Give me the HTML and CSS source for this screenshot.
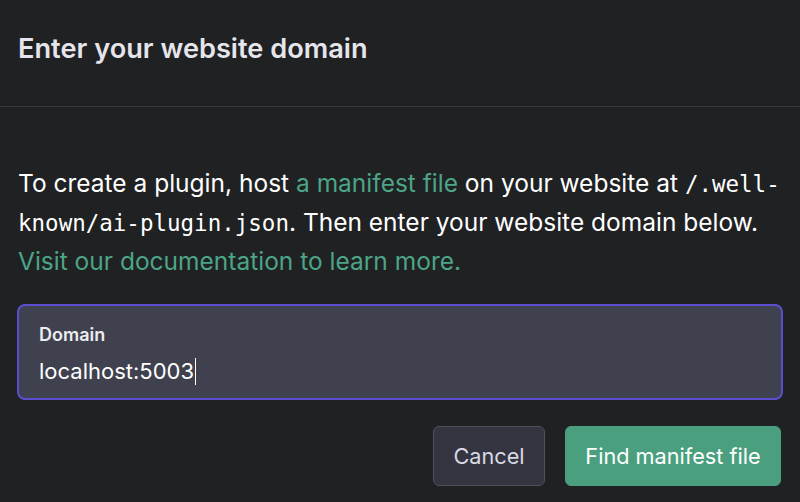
FILE: index.html
```html
<!DOCTYPE html>
<html lang="en">
<head>
    <meta charset="UTF-8">
    <meta name="viewport" content="width=device-width, initial-scale=1.0">
    <title>Enter your website domain</title>
    <link rel="stylesheet" href="styles.css">
</head>
<body>

    <div class="dialog">
        <div class="header">
            <h2>Enter your website domain</h2>
        </div>

        <div class="content">
            <p class="intro">
                To create a plugin, host <a href="#">a manifest file</a> on your website at <code>/.well-known/ai-plugin.json</code>. Then enter your website domain below.
                <a href="#">Visit our documentation to learn more.</a>
            </p>

            <div class="field">
                <label for="domain">Domain</label>
                <div class="value">localhost:5003<span class="caret"></span></div>
            </div>

            <div class="actions">
                <button class="btn btn-cancel">Cancel</button>
                <button class="btn btn-primary">Find manifest file</button>
            </div>
        </div>
    </div>

</body>
</html>
```

FILE: styles.css
```css
body {
    margin: 0;
    background-color: #202123;
    font-family: Inter, "Liberation Sans", sans-serif;
    color: #ececf1;
}
.dialog {
    width: 800px;
}
.header {
    height: 107px;
    padding: 0 18px;
    display: flex;
    align-items: center;
    border-bottom: 1px solid #393a3f;
    box-sizing: border-box;
}
.header h2 {
    margin: 0 0 10px 0;
    font-size: 27.2px;
    font-weight: 600;
    color: #e5e5eb;
}
.content {
    padding: 57px 18px 0 18px;
}
.intro {
    margin: 0;
    font-size: 24.5px;
    line-height: 38px;
    color: #ffffff;
}
.intro a {
    color: #4ca586;
    text-decoration: none;
}
.intro code {
    font-family: "DejaVu Sans Mono", monospace;
    font-size: 22.5px;
}
.field {
    margin: 24px -1px 0 -1px;
    border: 2px solid #5b4fd0;
    border-radius: 8px;
    background-color: #40414f;
    height: 96px;
    box-sizing: border-box;
    padding: 16px 20px 0 20px;
}
.field label {
    display: block;
    font-size: 18px;
    font-weight: 600;
    color: #ececf1;
    line-height: 26px;
}
.value {
    margin-top: 9px;
    font-size: 22px;
    line-height: 28px;
    color: #ffffff;
    display: flex;
    align-items: center;
}
.caret {
    display: inline-block;
    width: 1px;
    height: 27px;
    background-color: #ffffff;
    margin-left: 1px;
}
.actions {
    display: flex;
    justify-content: flex-end;
    gap: 20px;
    margin-top: 26px;
}
.btn {
    height: 60px;
    border-radius: 6px;
    font-family: Inter, "Liberation Sans", sans-serif;
    font-size: 21.7px;
    padding: 0 16px;
    cursor: pointer;
}
.btn-cancel {
    background-color: #343541;
    border: 1px solid #50515c;
    color: #d9d9e3;
    width: 112px;
}
.btn-primary {
    background-color: #4a9f7e;
    border: 1px solid #4a9f7e;
    color: #ffffff;
    width: 216px;
    margin-right: 1px;
}
```
